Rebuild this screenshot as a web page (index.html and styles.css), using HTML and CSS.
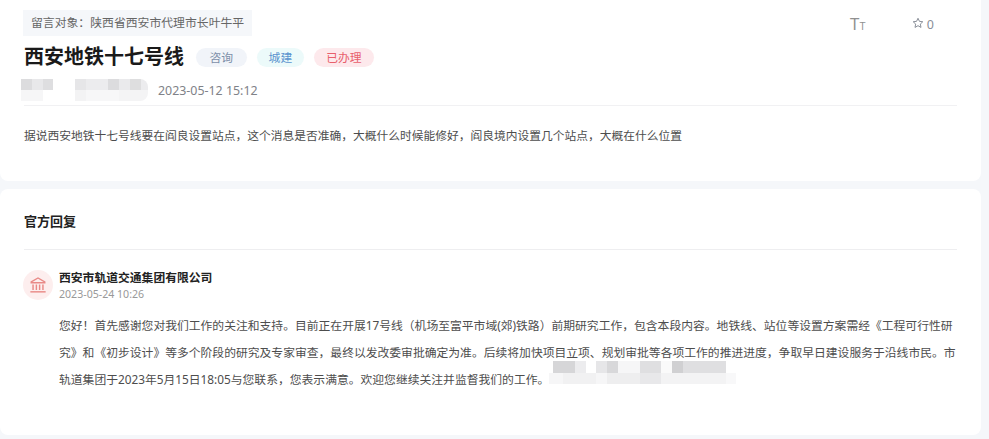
FILE: index.html

```html
<!DOCTYPE html>
<html lang="zh-CN">
<head>
    <meta charset="UTF-8">
    <title>西安地铁十七号线</title>
    <link rel="stylesheet" href="styles.css">
</head>
<body>
    <!-- 留言详情 -->
    <div class="card question">
        <div class="top-row">
            <div class="target">留言对象：陕西省西安市代理市长叶牛平</div>
            <div class="tools">
                <span class="font-size-icon">T<small>T</small></span>
                <span class="star">
                    <svg width="12" height="12" viewBox="0 0 24 24" fill="none" stroke="#8a8f99" stroke-width="2"><path d="M12 2.5l2.9 6.2 6.7.8-5 4.6 1.4 6.7-6-3.4-6 3.4 1.4-6.7-5-4.6 6.7-.8z"/></svg>
                    0
                </span>
            </div>
        </div>
        <div class="title-row">
            <h1>西安地铁十七号线</h1>
            <span class="tag tag-gray">咨询</span>
            <span class="tag tag-blue">城建</span>
            <span class="tag tag-red">已办理</span>
        </div>
        <div class="meta">
            <span class="blur blur-a"></span>
            <span class="blur blur-b"></span>
            <span class="date">2023-05-12 15:12</span>
        </div>
        <p class="content">据说西安地铁十七号线要在阎良设置站点，这个消息是否准确，大概什么时候能修好，阎良境内设置几个站点，大概在什么位置</p>
    </div>

    <!-- 官方回复 -->
    <div class="card reply">
        <h2>官方回复</h2>
        <div class="reply-body">
            <div class="org-icon">
                <svg width="18" height="18" viewBox="0 0 20 20" fill="none" stroke="#e98a87" stroke-width="1.6"><path d="M2.5 6.5L10 2.2l7.5 4.3v1h-15z"/><path d="M4.5 9.5v6M8.2 9.5v6M11.8 9.5v6M15.5 9.5v6"/><path d="M1.5 17.6h17"/></svg>
            </div>
            <div class="reply-text">
                <div class="org-name">西安市轨道交通集团有限公司</div>
                <div class="reply-date">2023-05-24 10:26</div>
                <p>您好！首先感谢您对我们工作的关注和支持。目前正在开展17号线（机场至富平市域(郊)铁路）前期研究工作，包含本段内容。地铁线、站位等设置方案需经《工程可行性研究》和《初步设计》等多个阶段的研究及专家审查，最终以发改委审批确定为准。后续将加快项目立项、规划审批等各项工作的推进进度，争取早日建设服务于沿线市民。市轨道集团于2023年5月15日18:05与您联系，您表示满意。欢迎您继续关注并监督我们的工作。<span class="blur blur-c"></span></p>
            </div>
        </div>
    </div>
</body>
</html>
```

FILE: styles.css

```css
body {
    margin: 0;
    background-color: #f5f7fa;
    font-family: "Noto Sans", "Noto Sans CJK SC", sans-serif;
    color: #333;
    height: 439px;
    overflow: hidden;
}

.card {
    background-color: #fff;
    margin-right: 8px;
    padding: 0 24px;
}

.question {
    height: 181px;
    border-radius: 0 0 8px 8px;
    margin-bottom: 8px;
    box-sizing: border-box;
    padding-top: 10px;
}

.reply {
    height: 246px;
    border-radius: 8px;
    box-sizing: border-box;
    padding-top: 22px;
}

.top-row {
    display: flex;
    justify-content: space-between;
    padding-right: 23px;
}

.target {
    background-color: #f5f7fa;
    font-size: 11.85px;
    line-height: 25px;
    padding: 0 8px;
    margin-left: -1px;
    color: #666;
}

.tools {
    display: flex;
    gap: 46px;
    color: #8a8f99;
    font-size: 12px;
    padding-top: 6px;
}

.font-size-icon {
    font-family: "Liberation Sans", sans-serif;
    font-size: 16px;
    line-height: 18px;
    color: #909090;
}

.font-size-icon small {
    font-size: 10px;
}

.star {
    font-size: 12.5px;
}

.title-row {
    display: flex;
    align-items: center;
    margin-top: 5px;
}

h1 {
    font-size: 20px;
    line-height: 32px;
    margin: 0 12px 0 0;
    color: #1a1a1a;
}

.tag {
    font-size: 11.8px;
    line-height: 19px;
    padding: 0 12px;
    border-radius: 10px;
    margin-right: 10px;
}

.tag-gray { background-color: #f1f4f9; color: #7d8fa9; padding: 0 13.5px; }
.tag-blue { background-color: #ecfafa; color: #5b94cf; }
.tag-red { background-color: #fde9ec; color: #e8606c; }

.meta {
    display: flex;
    align-items: center;
    height: 20px;
    margin-top: 7px;
    padding-bottom: 5px;
    border-bottom: 1px solid #f1f1f3;
}

/* mosaico de las zonas tapadas */
.blur {
    display: inline-block;
    background-repeat: no-repeat;
    filter: blur(0.6px);
}

.blur-a {
    width: 32px;
    height: 22px;
    margin-left: -3px;
    margin-right: 22px;
    background-image:
        linear-gradient(90deg, #dcdcde 0 11px, #e8e8ea 11px 22px, #dedee0 22px),
        linear-gradient(90deg, #f6f6f7 0 22px, #fff 22px);
    background-size: 100% 11px, 100% 11px;
    background-position: 0 0, 0 11px;
}

.blur-b {
    width: 73px;
    height: 22px;
    margin-right: 10px;
    border-radius: 0 8px 8px 0;
    background-image:
        linear-gradient(90deg, #e6e6e8 0 11px, #ececee 11px 33px, #dcdcde 33px 44px, #eaeaec 44px 55px, #dededf 55px 66px, #ececee 66px),
        linear-gradient(90deg, #f3f3f4 0 11px, #f7f7f8 11px 44px, #f4f4f5 44px);
    background-size: 100% 11px, 100% 11px;
    background-position: 0 0, 0 11px;
}

.date {
    font-size: 12.4px;
    color: #808288;
}

.content {
    font-size: 11.75px;
    line-height: 20px;
    margin: 19px 0 0;
    color: #4d4d4d;
}

h2 {
    font-size: 13px;
    line-height: 20px;
    margin: 0;
    padding-bottom: 18px;
    border-bottom: 1px solid #eeeef0;
    color: #222;
}

.reply-body {
    display: flex;
    margin-top: 20px;
}

.org-icon {
    width: 30px;
    height: 30px;
    border-radius: 50%;
    background-color: #fdeeee;
    display: flex;
    align-items: center;
    justify-content: center;
    margin-left: -1px;
    margin-right: 6px;
    flex-shrink: 0;
}

.reply-text {
    margin-top: -2px;
}

.org-name {
    font-size: 11.8px;
    font-weight: bold;
    line-height: 18px;
    color: #222;
}

.reply-date {
    font-size: 10.6px;
    line-height: 17px;
    color: #999;
}

.reply-text p {
    font-size: 11.8px;
    line-height: 27px;
    margin: 9px 0 0;
    color: #4d4d4d;
}

.blur-c {
    width: 187px;
    height: 23px;
    margin-top: -6px;
    background-image:
        linear-gradient(90deg, #fff 0 4px, #d6d6d8 4px 26px, #ececee 26px 37px, #fff 37px 47px, #e6e6e8 47px 58px, #d8d8da 58px 69px, #f6f6f7 69px 91px, #dfdfe1 91px 112px, #fafafa 112px 123px, #d0d0d2 123px 134px, #dfdfe1 134px 177px, #fff 177px),
        linear-gradient(90deg, #f6f6f7 0 14px, #f1f1f2 14px 47px, #f6f6f7 47px 58px, #eeeeef 58px 91px, #e8e8ea 91px 112px, #f3f3f4 112px 177px, #f8f8f9 177px);
    background-size: 100% 12px, 100% 11px;
    background-position: 0 0, 0 12px;
}
```
